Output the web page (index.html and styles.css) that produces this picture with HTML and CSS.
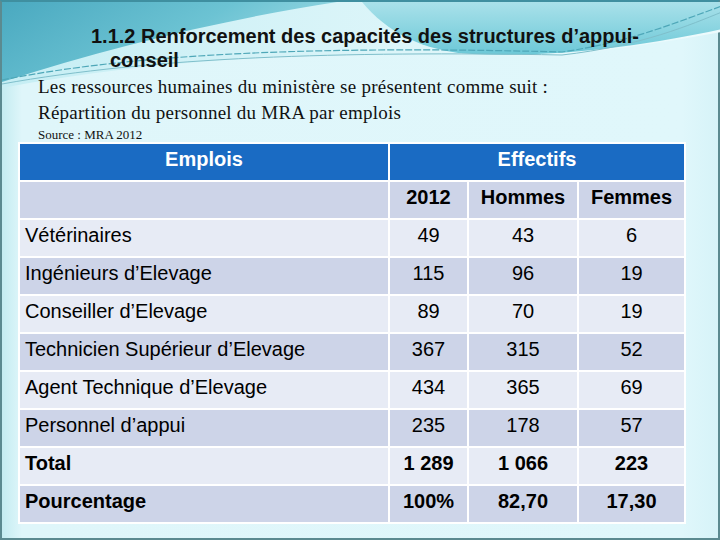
FILE: index.html
```html
<!DOCTYPE html>
<html lang="fr">

<head>
    <meta charset="UTF-8">
    <meta name="viewport" content="width=device-width, initial-scale=1.0">
    <title>Renforcement des capacités</title>
    <link rel="stylesheet" href="styles.css">
</head>

<body>
    <div class="slide">
        <!-- decorative waves behind the content -->
        <svg class="waves" width="720" height="140" viewBox="0 0 720 140">
            <defs>
                <linearGradient id="tealLeft" x1="0" y1="0" x2="1" y2="0.4">
                    <stop offset="0" stop-color="#4aa9c0" />
                    <stop offset="0.6" stop-color="#6cc3d3" />
                    <stop offset="1" stop-color="#9ad9e4" />
                </linearGradient>
                <linearGradient id="tealRight" x1="0" y1="0" x2="0" y2="1">
                    <stop offset="0" stop-color="#a9e1ea" />
                    <stop offset="1" stop-color="#6cc8d7" />
                </linearGradient>
                <linearGradient id="swoosh" x1="0" y1="0" x2="1" y2="0">
                    <stop offset="0" stop-color="#c6eef4" />
                    <stop offset="1" stop-color="#eefbfd" />
                </linearGradient>
            </defs>
            <path d="M0,0 H720 V30 C640,44 560,58 470,54 C300,48 140,60 0,86 Z" fill="url(#swoosh)" />
            <path d="M0,0 H335 C230,16 110,44 0,80 Z" fill="url(#tealLeft)" />
            <path d="M360,0 H720 V27 C650,42 560,56 470,52 C420,49 385,30 360,0 Z" fill="url(#tealRight)" />
            <path d="M0,78 C140,50 330,44 560,50 C630,40 680,18 720,4" fill="none" stroke="#4ea7b8" stroke-width="1.2" stroke-dasharray="7 2" />
            <path d="M0,82 C150,55 340,49 560,53 C640,44 690,22 720,10" fill="none" stroke="#7fbfcb" stroke-width="1" />
        </svg>

        <h1 class="title">1.1.2 Renforcement des capacités des structures d’appui-conseil</h1>

        <div class="intro">
            <p>Les ressources humaines du ministère se présentent comme suit :</p>
            <p>Répartition du personnel du MRA par emplois</p>
            <p class="source">Source : MRA 2012</p>
        </div>

        <table class="staff">
            <colgroup>
                <col class="c-job">
                <col class="c-year">
                <col class="c-men">
                <col class="c-women">
            </colgroup>
            <tr class="head">
                <th>Emplois</th>
                <th colspan="3">Effectifs</th>
            </tr>
            <tr class="sub dark">
                <td></td>
                <td>2012</td>
                <td>Hommes</td>
                <td>Femmes</td>
            </tr>
            <tr class="light">
                <td>Vétérinaires</td>
                <td>49</td>
                <td>43</td>
                <td>6</td>
            </tr>
            <tr class="dark">
                <td>Ingénieurs d’Elevage</td>
                <td>115</td>
                <td>96</td>
                <td>19</td>
            </tr>
            <tr class="light">
                <td>Conseiller d’Elevage</td>
                <td>89</td>
                <td>70</td>
                <td>19</td>
            </tr>
            <tr class="dark">
                <td>Technicien Supérieur d’Elevage</td>
                <td>367</td>
                <td>315</td>
                <td>52</td>
            </tr>
            <tr class="light">
                <td>Agent Technique d’Elevage</td>
                <td>434</td>
                <td>365</td>
                <td>69</td>
            </tr>
            <tr class="dark">
                <td>Personnel d’appui</td>
                <td>235</td>
                <td>178</td>
                <td>57</td>
            </tr>
            <tr class="light bold">
                <td>Total</td>
                <td>1 289</td>
                <td>1 066</td>
                <td>223</td>
            </tr>
            <tr class="dark bold">
                <td>Pourcentage</td>
                <td>100%</td>
                <td>82,70</td>
                <td>17,30</td>
            </tr>
        </table>
    </div>
</body>

</html>
```

FILE: styles.css
```css
* {
    margin: 0;
    padding: 0;
    box-sizing: border-box;
}

body {
    width: 720px;
    height: 540px;
    overflow: hidden;
    font-family: "Liberation Sans", Arial, sans-serif;
}

.slide {
    position: relative;
    width: 720px;
    height: 540px;
    border: 2px solid #5b8a90;
    border-top-color: #3f8fa0;
    background: linear-gradient(90deg, #c4ecf1 0, #dff6fa 20px, #e0f7fb 680px, #d6f3f8 100%);
    padding-top: 22px;
}

.waves {
    position: absolute;
    top: 0;
    left: 0;
}

.title {
    position: relative;
    font-size: 20px;
    font-weight: bold;
    line-height: 24px;
    color: #111;
    padding-left: 108px;
    padding-right: 58px;
    text-indent: -19px;
}

.intro {
    position: relative;
    padding-left: 36px;
    margin-top: 2px;
    font-family: "Liberation Serif", "Times New Roman", serif;
    font-size: 19px;
    letter-spacing: 0.25px;
    line-height: 26px;
    color: #111;
}

.intro .source {
    font-size: 13px;
    letter-spacing: 0;
    line-height: 16px;
    margin-top: 1px;
}

.staff {
    position: relative;
    margin-left: 16px;
    margin-top: -1px;
    border-collapse: separate;
    border-spacing: 2px;
    background: #ffffff;
    font-size: 20px;
    color: #000;
}

.c-job { width: 368px; }
.c-year { width: 77px; }
.c-men { width: 108px; }
.c-women { width: 105px; }

.staff tr {
    height: 36px;
}

.staff th,
.staff td {
    text-align: center;
    vertical-align: top;
    line-height: 23px;
    padding-top: 4px;
    font-weight: normal;
}

.staff td:first-child {
    text-align: left;
    padding-left: 5px;
}

.staff .head th {
    background: #1a6bc3;
    color: #fff;
    font-weight: bold;
}

.staff .sub td {
    font-weight: bold;
}

.dark td {
    background: #cdd4e8;
}

.light td {
    background: #e7ebf5;
}

.bold td {
    font-weight: bold;
}
```
